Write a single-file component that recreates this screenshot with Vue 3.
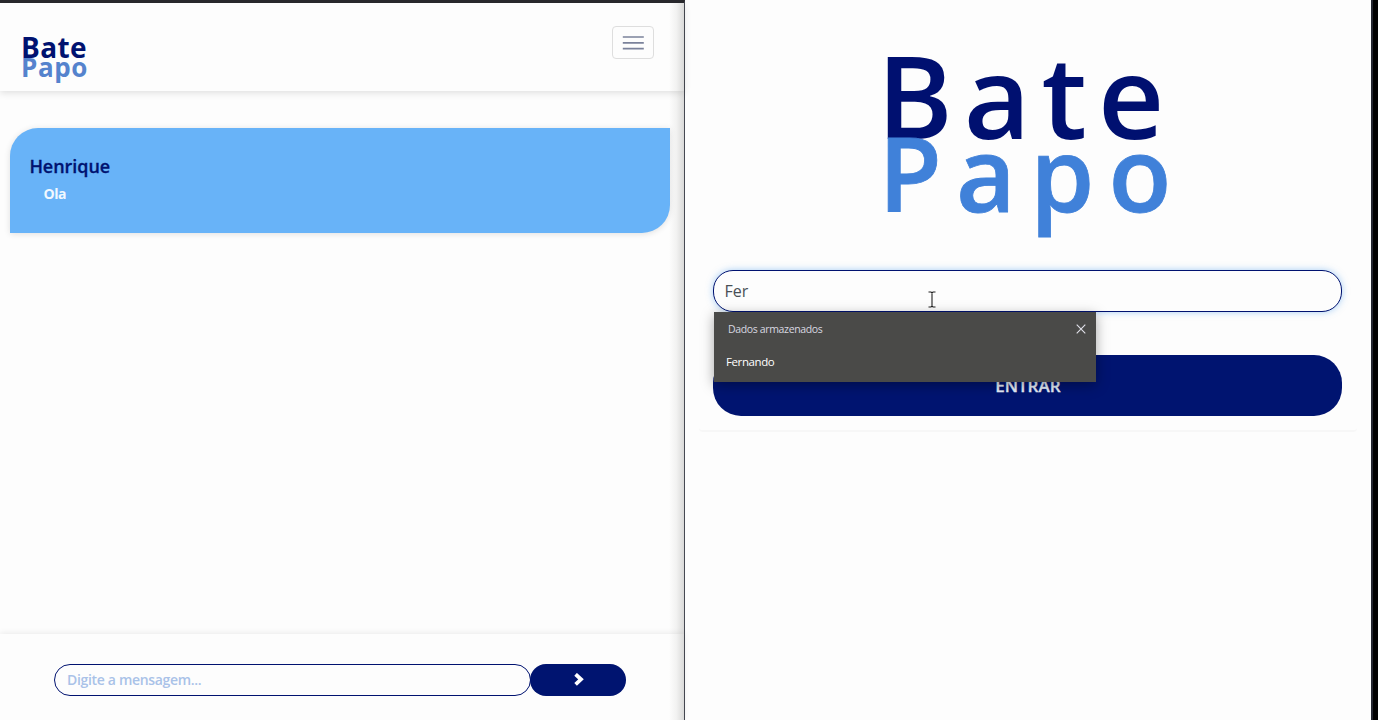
<script setup>
import { ref } from 'vue'

const name = ref('Fer')
const message = ref('')
const messages = [{ author: 'Henrique', text: 'Ola' }]
const suggestions = ['Fernando']
</script>

<template>
  <div class="desktop">
    <section class="chat">
      <header class="topbar">
        <div class="brand"><span class="bate">Bate</span><span class="papo">Papo</span></div>
        <button class="toggler" aria-label="Menu">
          <svg width="22" height="16" viewBox="0 0 22 16"><path d="M.8 2h21M.8 7.8h21M.8 13.6h21" stroke="#7b829b" stroke-width="1.7" /></svg>
        </button>
      </header>
      <main class="messages">
        <article v-for="m in messages" :key="m.author" class="bubble">
          <h2>{{ m.author }}</h2>
          <p>{{ m.text }}</p>
        </article>
      </main>
      <footer class="composer">
        <input v-model="message" class="message-input" placeholder="Digite a mensagem..." />
        <button class="send" aria-label="Enviar">
          <svg width="10" height="13" viewBox="0 0 10 13"><path d="M1.6 1.3L7 6.3L1.6 11.3" fill="none" stroke="#fff" stroke-width="3.8" /></svg>
        </button>
      </footer>
    </section>

    <section class="login">
      <h1 class="logo"><span class="bate">Bate</span><span class="papo">Papo</span></h1>
      <div class="field">
        <input v-model="name" class="name-input" />
        <svg class="cursor" width="8" height="17" viewBox="0 0 8 17"><path d="M.5 1h2.5l1 1l1-1h2.5M4 2v13M.5 16h2.5l1-1l1 1h2.5" fill="none" stroke="#222" stroke-width="1.1" /></svg>
        <div class="autofill">
          <div class="autofill-head">
            <span>Dados armazenados</span>
            <svg width="10" height="10" viewBox="0 0 10 10"><path d="M.7.7l8.6 8.6M9.3.7L.7 9.3" stroke="#e2e2ea" stroke-width="1.1" /></svg>
          </div>
          <div v-for="s in suggestions" :key="s" class="autofill-item">{{ s }}</div>
        </div>
      </div>
      <button class="enter">ENTRAR</button>
      <div class="card-edge"></div>
    </section>
    <div class="window-edge"></div>
  </div>
</template>

<style>
body { margin: 0; overflow: hidden; background: #fdfdfd; }
</style>

<style scoped>
.desktop {
  display: flex;
  width: 1378px;
  height: 720px;
  overflow: hidden;
  background: #fdfdfd;
  font-family: "Open Sans", "Noto Sans", sans-serif;
}
.desktop * { box-sizing: border-box; }
button, input { font-family: inherit; margin: 0; outline: none; }
.chat {
  position: relative;
  display: flex;
  flex-direction: column;
  width: 685px;
  border-top: 3px solid #29292d;
  border-right: 1px solid #464952;
}
.chat::after {
  content: "";
  position: absolute;
  top: 0;
  right: 0;
  bottom: 0;
  width: 15px;
  background: linear-gradient(to right, transparent, rgba(60, 60, 50, .06) 50%, rgba(40, 40, 35, .17));
}
.topbar {
  display: flex;
  justify-content: space-between;
  height: 88px;
  padding: 23px 30px 0 21px;
  box-shadow: 0 2px 7px rgba(0, 0, 0, .12);
}
.brand { display: flex; flex-direction: column; font-weight: 700; }
.brand .bate { font-size: 28px; line-height: 28px; margin-top: 7px; letter-spacing: .4px; color: #001270; }
.brand .papo { font-size: 26px; line-height: 26px; margin-top: -7px; letter-spacing: .6px; color: #5583cd; }
.toggler {
  display: flex;
  align-items: center;
  justify-content: center;
  width: 42px;
  height: 33px;
  padding: 0;
  background: #fdfdfd;
  border: 1px solid #dedede;
  border-radius: 4px;
}
.messages { flex: 1; padding: 37.4px 14.5px 0 10.4px; }
.bubble {
  height: 104.5px;
  padding: 24.5px 20px 0 19px;
  background: #68b3f8;
  border-radius: 28px 0 28px 0;
  box-shadow: 0 1px 6px rgba(0, 0, 0, .12);
}
.bubble h2 { margin: 0; font-size: 18px; line-height: 26px; font-weight: 600; letter-spacing: -.05px; -webkit-text-stroke: .3px #001270; color: #001270; }
.bubble p { margin: 4px 0 0 14px; font-size: 14px; line-height: 22px; font-weight: 700; letter-spacing: -.4px; color: #f1f8ff; }
.composer {
  display: flex;
  height: 86px;
  padding: 30px 0 0 54px;
  box-shadow: 0 -1px 6px rgba(0, 0, 0, .08);
}
.message-input {
  width: 477px;
  height: 32px;
  padding: 0 12px 2px;
  border: 1px solid #001270;
  border-radius: 16px;
  background: transparent;
  font-size: 14px;
  font-weight: 600;
  letter-spacing: -.32px;
}
.message-input::placeholder { color: #a9c2e8; opacity: 1; }
.send {
  display: flex;
  align-items: center;
  justify-content: center;
  width: 96px;
  height: 32px;
  margin-left: -1px;
  padding: 0 0 1px 2px;
  border: 0;
  border-radius: 16px;
  background: #001470;
}
.login { width: 686px; padding: 37px 14px 0 14px; background: #fdfdfd; }
.logo {
  display: flex;
  flex-direction: column;
  height: 233px;
  margin: 0;
  padding-left: 178px;
  font-weight: 600;
}
.logo .bate { font-size: 115px; line-height: 115px; letter-spacing: 11px; color: #001070; }
.logo .papo { font-size: 103px; line-height: 103px; margin-top: -31px; padding-left: 1.5px; letter-spacing: 14.3px; -webkit-text-stroke: .8px #4081d9; color: #4081d9; }
.field { position: relative; height: 85px; padding: 0 14.4px; }
.name-input {
  display: block;
  width: 629px;
  height: 42px;
  padding: 0 10px;
  border: 1px solid #001270;
  border-radius: 20px;
  background: #fdfdfd;
  box-shadow: 0 0 7px rgba(80, 160, 240, .5);
  font-size: 16px;
  color: #495057;
}
.cursor { position: absolute; left: 229px; top: 21px; }
.autofill {
  position: absolute;
  top: 42px;
  left: 15px;
  width: 382px;
  height: 69.5px;
  background: #4a4a48;
  box-shadow: 0 3px 12px rgba(0, 0, 0, .35);
}
.autofill-head {
  display: flex;
  align-items: center;
  justify-content: space-between;
  height: 34px;
  padding: 0 9.6px 0 14px;
  font-size: 10.5px;
  letter-spacing: -.35px;
  color: #d8d8e0;
}
.autofill-item { padding-left: 12px; font-size: 11.5px; line-height: 32px; letter-spacing: -.4px; font-weight: 500; color: #fff; }
.enter {
  display: block;
  width: 629px;
  height: 61px;
  margin-left: 14.4px;
  padding: 0;
  border: 0;
  border-radius: 28px;
  background: #001470;
  font-size: 17px;
  font-weight: 600;
  -webkit-text-stroke: .3px #e8effa;
  color: #e8effa;
}
.card-edge { height: 16px; border-bottom: 2px solid #f7f7f7; border-radius: 0 0 4px 4px; }
.window-edge { width: 7px; background: #000; border-left: 2px solid #22252f; }
</style>
